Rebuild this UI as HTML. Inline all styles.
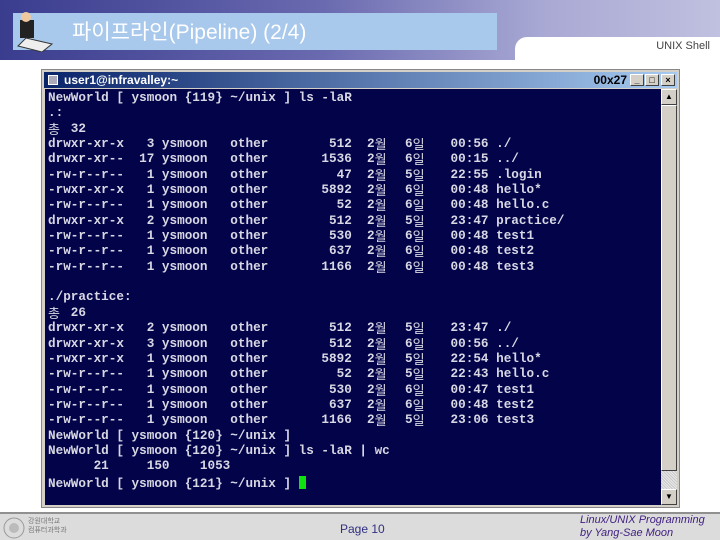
<!DOCTYPE html>
<html><head><meta charset="utf-8"><style>
*{margin:0;padding:0;box-sizing:border-box}
body{width:720px;height:540px;overflow:hidden;background:#fff;position:relative;font-family:"Liberation Sans","Noto Sans CJK KR",sans-serif}
#hdr{position:absolute;left:0;top:0;width:720px;height:60px;background:linear-gradient(90deg,#3a3c8e 0%,#6a6ab0 45%,#a8a8d4 75%,#c0c0e0 100%)}
#tbox{position:absolute;left:13px;top:13px;width:484px;height:37px;background:#a8c8ec}
#title{position:absolute;left:72px;top:16px;font-size:21px;color:#fff;font-family:"Liberation Sans","Noto Sans CJK KR",sans-serif}
#tab{position:absolute;left:515px;top:37px;width:205px;height:23px;background:#fff;border-top-left-radius:12px}
#unix{position:absolute;right:10px;top:40px;font-size:11px;color:#444}
#win{position:absolute;left:41px;top:69px;width:639px;height:439px;background:#d4d0c8;border:1px solid #888}
#tbar{position:absolute;left:2px;top:2px;width:633px;height:16px;background:linear-gradient(90deg,#0a246a,#a6caf0)}
#tbar .t{position:absolute;left:20px;top:0;font-size:12px;font-weight:bold;color:#fff;line-height:16px}
#tbar .r{position:absolute;right:50px;top:0;font-size:12px;font-weight:bold;color:#000;line-height:16px}
.btn{position:absolute;top:2px;width:14px;height:12px;background:#d4d0c8;border:1px solid;border-color:#fff #404040 #404040 #fff;font-size:9px;text-align:center;line-height:10px;font-weight:bold}
#term{position:absolute;left:3px;top:19px;width:616px;height:416px;background:#03034a}
#sb{position:absolute;left:619px;top:19px;width:16px;height:416px;background:repeating-linear-gradient(45deg,#e8e8e8 0 1px,#c8c8c8 1px 2px)}
pre{position:absolute;left:3px;top:1px;font-family:"Liberation Mono","Noto Sans CJK KR",monospace;font-size:12.67px;line-height:15.35px;color:#d8d8e4;font-weight:bold}
.k{display:inline-block;width:15.2px;font-weight:normal;font-size:13px;line-height:13px;position:relative;top:2px}
#cur{display:inline-block;width:7px;height:13px;background:#10e010;position:relative;top:2px}
#foot{position:absolute;left:0;top:512px;width:720px;height:28px;background:#dcdcdc;border-top:2px solid #909090}
</style></head><body>
<div id="hdr"></div>
<div id="tbox"></div>
<svg style="position:absolute;left:12px;top:8px" width="44" height="44"><rect x="8" y="12" width="14" height="18" fill="#222"/><circle cx="14" cy="9" r="5" fill="#f0c8a0"/><path d="M14 30 L40 36 L30 44 L6 38Z" fill="#eee" stroke="#333"/></svg>
<div id="title">파이프라인(Pipeline) (2/4)</div>
<div id="tab"></div>
<div id="unix">UNIX Shell</div>
<div id="win">
<div id="tbar"><span style="position:absolute;left:4px;top:3px;width:10px;height:10px;background:#aab;border:1px solid #fff"></span><span class="t">user1@infravalley:~</span><span class="r">00x27</span>
<span class="btn" style="right:33px">_</span><span class="btn" style="right:18px">□</span><span class="btn" style="right:2px">×</span></div>
<div id="term"><pre>NewWorld [ ysmoon {119} ~/unix ] ls -laR
.:
<span class="k">총</span> 32
drwxr-xr-x   3 ysmoon   other        512  2<span class="k">월</span>  6<span class="k">일</span>   00:56 ./
drwxr-xr--  17 ysmoon   other       1536  2<span class="k">월</span>  6<span class="k">일</span>   00:15 ../
-rw-r--r--   1 ysmoon   other         47  2<span class="k">월</span>  5<span class="k">일</span>   22:55 .login
-rwxr-xr-x   1 ysmoon   other       5892  2<span class="k">월</span>  6<span class="k">일</span>   00:48 hello*
-rw-r--r--   1 ysmoon   other         52  2<span class="k">월</span>  6<span class="k">일</span>   00:48 hello.c
drwxr-xr-x   2 ysmoon   other        512  2<span class="k">월</span>  5<span class="k">일</span>   23:47 practice/
-rw-r--r--   1 ysmoon   other        530  2<span class="k">월</span>  6<span class="k">일</span>   00:48 test1
-rw-r--r--   1 ysmoon   other        637  2<span class="k">월</span>  6<span class="k">일</span>   00:48 test2
-rw-r--r--   1 ysmoon   other       1166  2<span class="k">월</span>  6<span class="k">일</span>   00:48 test3

./practice:
<span class="k">총</span> 26
drwxr-xr-x   2 ysmoon   other        512  2<span class="k">월</span>  5<span class="k">일</span>   23:47 ./
drwxr-xr-x   3 ysmoon   other        512  2<span class="k">월</span>  6<span class="k">일</span>   00:56 ../
-rwxr-xr-x   1 ysmoon   other       5892  2<span class="k">월</span>  5<span class="k">일</span>   22:54 hello*
-rw-r--r--   1 ysmoon   other         52  2<span class="k">월</span>  5<span class="k">일</span>   22:43 hello.c
-rw-r--r--   1 ysmoon   other        530  2<span class="k">월</span>  6<span class="k">일</span>   00:47 test1
-rw-r--r--   1 ysmoon   other        637  2<span class="k">월</span>  6<span class="k">일</span>   00:48 test2
-rw-r--r--   1 ysmoon   other       1166  2<span class="k">월</span>  5<span class="k">일</span>   23:06 test3
NewWorld [ ysmoon {120} ~/unix ]
NewWorld [ ysmoon {120} ~/unix ] ls -laR | wc
      21     150    1053
NewWorld [ ysmoon {121} ~/unix ] <span id="cur"></span></pre></div>
<div id="sb"><div class="btn" style="left:0;top:0;width:16px;height:16px;line-height:14px;font-size:8px">▲</div><div class="btn" style="left:0;top:400px;width:16px;height:16px;line-height:14px;font-size:8px">▼</div><div style="position:absolute;left:0;top:16px;width:16px;height:366px;background:#d4d0c8;border:1px solid;border-color:#fff #404040 #404040 #fff"></div></div>
</div>
<div id="foot">
<svg style="position:absolute;left:3px;top:3px" width="22" height="22"><circle cx="11" cy="11" r="10" fill="none" stroke="#999"/><circle cx="11" cy="11" r="5" fill="#bbb"/></svg>
<div style="position:absolute;left:28px;top:3px;font-size:7px;color:#777;line-height:9px">강원대학교<br>컴퓨터과학과</div>
<div style="position:absolute;left:340px;top:8px;font-size:12px;color:#303080">Page 10</div>
<div style="position:absolute;left:580px;top:0px;font-size:11px;color:#402080;font-style:italic;line-height:13px">Linux/UNIX Programming<br>by Yang-Sae Moon</div>
</div>
</body></html>
